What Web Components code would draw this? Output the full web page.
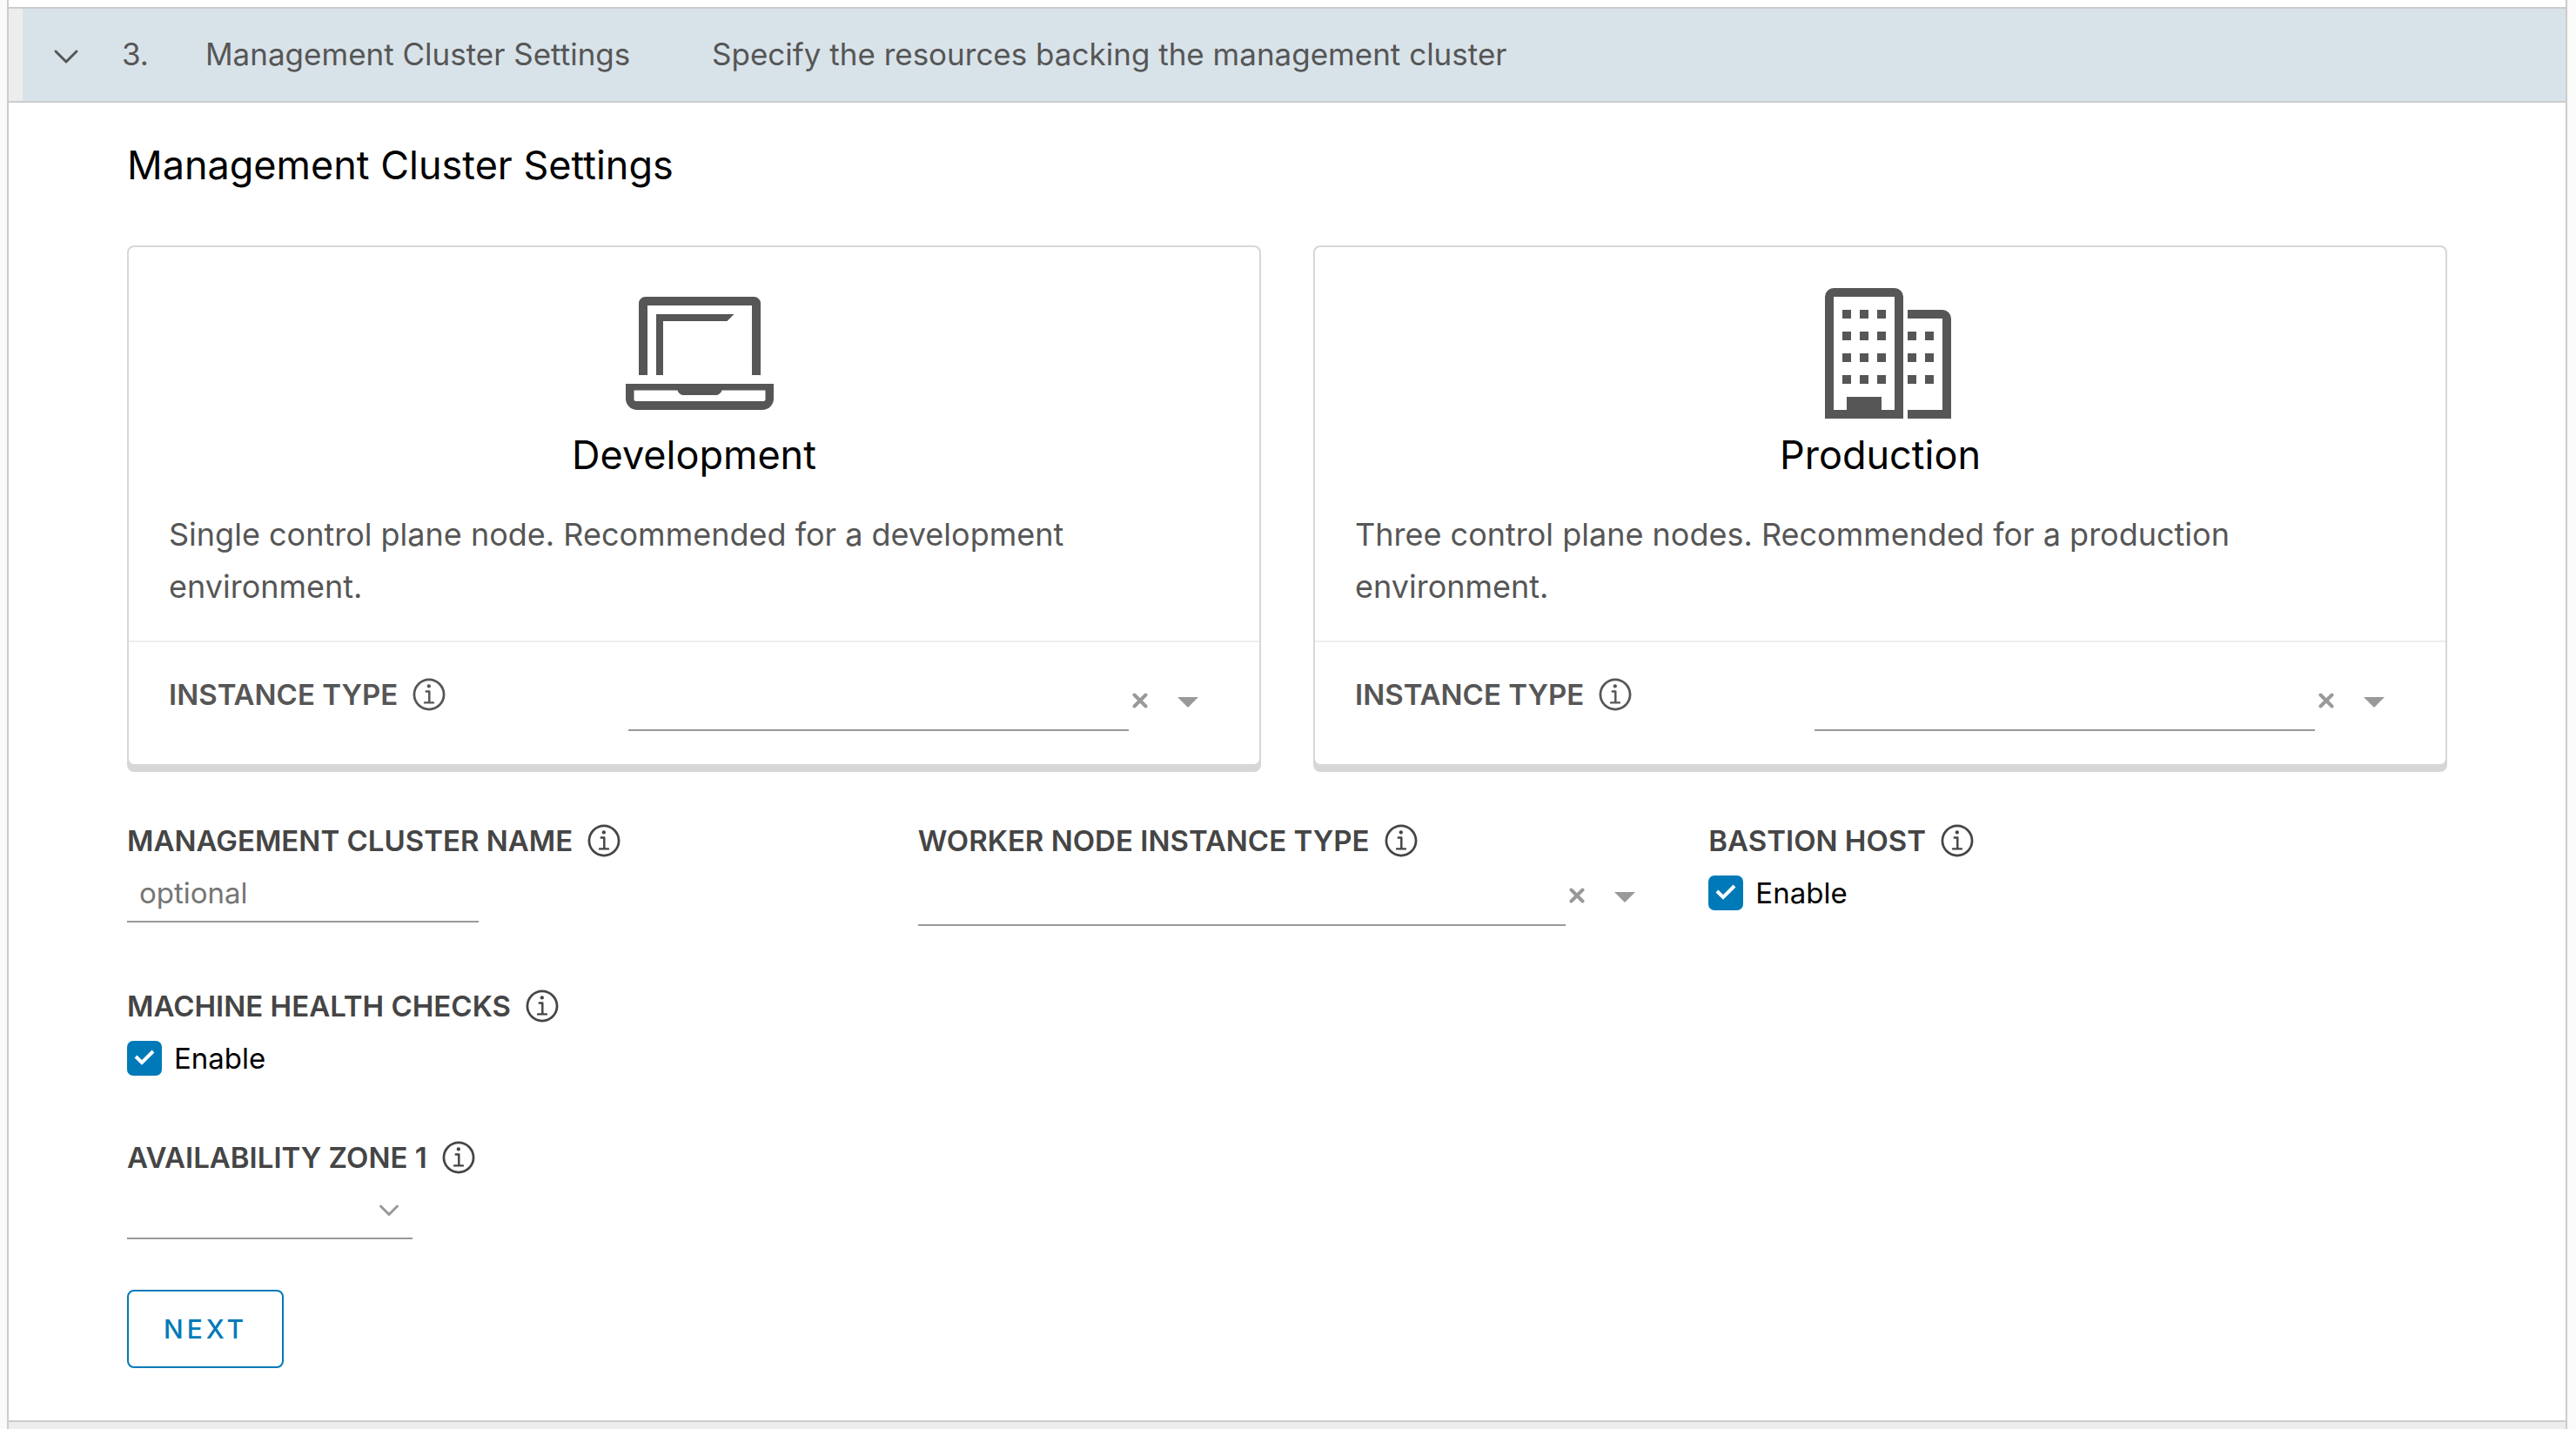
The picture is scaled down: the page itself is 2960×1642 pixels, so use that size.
<!DOCTYPE html>
<html lang="en">
<head>
<meta charset="utf-8">
<title>Management Cluster Settings</title>
<style>
  html { background: #fafafa; }
  body { margin: 0 10px 0 8px; font-family: Inter, "Open Sans", sans-serif; color: #000; min-height: 100vh; display: flex; }
  wizard-panel { flex: 1; }
</style>
</head>
<body>
<wizard-panel>
  <wizard-step number="3." heading="Management Cluster Settings" summary="Specify the resources backing the management cluster">
    <cluster-form></cluster-form>
  </wizard-step>
</wizard-panel>

<script>
const define = (name, html, setup) => {
  const template = document.createElement('template');
  template.innerHTML = '<style>*{box-sizing:border-box}button,input,select{font:inherit;color:inherit;margin:0}</style>' + html;
  customElements.define(name, class extends HTMLElement {
    constructor() {
      super();
      this.attachShadow({ mode: 'open' }).append(template.content.cloneNode(true));
    }
    connectedCallback() {
      if (setup) setup(this, this.shadowRoot);
    }
  });
};
const fill = (host, root) => {
  root.querySelectorAll('[data-text]').forEach(el => { el.textContent = host.getAttribute(el.dataset.text); });
};

define('info-icon', `
  <style>
    :host { display: block; width: 40px; height: 40px; flex: none; }
    svg { display: block; width: 100%; height: 100%; fill: currentColor; }
  </style>
  <svg viewBox="5 5 26 26" aria-hidden="true">
    <path fill-rule="evenodd" d="M18 6a12 12 0 1 0 0 24 12 12 0 0 0 0-24Zm0 22.2a10.2 10.2 0 1 1 0-20.4 10.2 10.2 0 0 1 0 20.4Z"/>
    <circle cx="17.9" cy="11.8" r="1.4"/>
    <path d="M21.2 23.3H19v-7.600a.8.8 0 0 0-.8-.8h-2.300a.8.8 0 0 0 0 1.600h1.500v6.800h-2.600a.8.8 0 0 0 0 1.600h6.400a.8.8 0 0 0 0-1.600Z"/>
  </svg>`);

const labelStyle = `
  .label { display: flex; align-items: center; gap: 16px; height: 40px; font-size: 33px; line-height: 40px; font-weight: 600; color: #454545; white-space: nowrap; }`;

define('combo-input', `
  <style>
    :host { display: block; }
    ${labelStyle}
    .combo { display: flex; align-items: flex-start; margin-top: 16px; }
    input { flex: 1; min-width: 0; height: 62px; border: 0; border-bottom: 2px solid #999; background: none; padding: 0 16px; font-size: 33px; outline: 0; border-radius: 0; }
    button { height: 54px; border: 0; padding: 0; background: none; display: grid; place-items: center; color: #999; }
    .clear { width: 26px; }
    .toggle { width: 78px; padding: 4px 0 0 6px; }
    svg { display: block; fill: currentColor; }
    :host([inline]) { display: grid; grid-template-columns: 7fr 9fr; }
    :host([inline]) .label { color: #565656; }
    :host([inline]) .combo { margin-top: 0; }
  </style>
  <div class="label"><label for="field" data-text="label"></label><info-icon></info-icon></div>
  <div class="combo">
    <input id="field" type="text">
    <button class="clear" type="button" aria-label="Clear"><svg width="18" height="18" viewBox="0 0 18 18"><path d="M2.500 2.500l13 13M15.500 2.500l-13 13" stroke="currentColor" stroke-width="4" stroke-linecap="round"/></svg></button>
    <button class="toggle" type="button" aria-label="Show options"><svg width="24" height="12" viewBox="0 0 24 12"><path d="M0 0h24L12 12Z"/></svg></button>
  </div>`, fill);

define('text-field', `
  <style>
    :host { display: block; }
    ${labelStyle}
    input { display: block; width: 404px; height: 66px; margin-top: 8px; border: 0; border-bottom: 2px solid #999; border-radius: 0; background: none; padding: 0 14px; font-size: 33px; outline: 0; }
    input::placeholder { color: #757575; opacity: 1; }
  </style>
  <div class="label"><label for="field" data-text="label"></label><info-icon></info-icon></div>
  <input id="field" type="text">`, (host, root) => {
    fill(host, root);
    root.querySelector('input').placeholder = host.getAttribute('placeholder');
  });

define('check-field', `
  <style>
    :host { display: block; }
    ${labelStyle}
    .option { display: flex; align-items: center; gap: 14px; height: 64px; margin-top: 8px; font-size: 33px; line-height: 40px; }
    .box { display: grid; width: 40px; height: 40px; }
    .box > * { grid-area: 1 / 1; }
    input { appearance: none; width: 40px; height: 40px; border: 2px solid #999; border-radius: 7px; background: #fff; }
    input:checked { border-color: #0079b8; background: #0079b8; }
    svg { width: 40px; height: 40px; pointer-events: none; fill: none; stroke: #fff; stroke-width: 4; }
  </style>
  <div class="label"><span id="title" data-text="label"></span><info-icon></info-icon></div>
  <div class="option">
    <span class="box">
      <input id="field" type="checkbox" checked aria-describedby="title">
      <svg viewBox="0 0 40 40" aria-hidden="true"><path d="M10 18L17 25L30 12"/></svg>
    </span>
    <label for="field">Enable</label>
  </div>`, fill);

define('select-field', `
  <style>
    :host { display: block; }
    ${labelStyle}
    .control { display: grid; width: 328px; margin-top: 8px; }
    .control > * { grid-area: 1 / 1; }
    select { appearance: none; width: 100%; height: 66px; border: 0; border-bottom: 2px solid #999; border-radius: 0; background: none; padding: 0 48px 0 14px; font-size: 33px; outline: 0; }
    svg { place-self: center end; margin-right: 14px; width: 26px; height: 26px; pointer-events: none; fill: none; stroke: #999; stroke-width: 3; stroke-linecap: round; stroke-linejoin: round; }
  </style>
  <div class="label"><label for="field" data-text="label"></label><info-icon></info-icon></div>
  <div class="control">
    <select id="field"><option></option></select>
    <svg viewBox="0 0 26 26" aria-hidden="true"><path d="M3.500 8l9.500 9.500L22.500 8"/></svg>
  </div>`, fill);

define('plan-card', `
  <style>
    :host { display: block; border: 2px solid #d7d7d7; border-radius: 8px; box-shadow: 0 7px 0 0 #d7d7d7; background: #fff; }
    .about { padding: 37px 46px 32px; }
    .icon { display: flex; justify-content: center; padding-left: 12px; color: #565656; }
    h3 { margin: 4px 0 33px; font-size: 45px; line-height: 56px; font-weight: 400; text-align: center; }
    p { margin: 0; font-size: 36px; line-height: 60px; color: #565656; }
    .setting { border-top: 2px solid #ededed; padding: 40px 46px 38px; }
  </style>
  <div class="about">
    <div class="icon"><slot name="icon"></slot></div>
    <h3 data-text="heading"></h3>
    <p><slot></slot></p>
  </div>
  <div class="setting"><combo-input inline label="INSTANCE TYPE"></combo-input></div>`, fill);

define('wizard-step', `
  <style>
    :host { display: block; border-top: 2px solid #ccc; border-bottom: 2px solid #ccc; }
    .header { display: flex; align-items: center; width: 100%; height: 106px; border: 0; border-left: 16px solid #ededed; padding: 0 32px 2px 34px; background: #d8e3e9; color: #565656; font-size: 35px; line-height: 48px; text-align: left; }
    svg { width: 32px; height: 32px; fill: none; stroke: currentColor; stroke-width: 3; stroke-linecap: round; stroke-linejoin: round; }
    .number { width: 96px; margin-left: 48px; }
    .name { width: 582px; }
    .content { border-top: 2px solid #ccc; padding: 42px 136px 60px; }
    h2 { margin: 0 0 62px; font-size: 45px; line-height: 60px; font-weight: 400; }
  </style>
  <button class="header" type="button" aria-expanded="true">
    <svg viewBox="0 0 32 32" aria-hidden="true"><path d="M4 13l12 12L28 13"/></svg>
    <span class="number" data-text="number"></span>
    <span class="name" data-text="heading"></span>
    <span data-text="summary"></span>
  </button>
  <div class="content">
    <h2 data-text="heading"></h2>
    <slot></slot>
  </div>`, fill);

define('wizard-panel', `
  <style>
    :host { display: flex; flex-direction: column; border: 2px solid #ccc; border-width: 0 2px; padding-top: 8px; background: #fff; }
    .next-step { flex: 1; background: #ededed; }
  </style>
  <slot></slot>
  <div class="next-step"></div>`);

define('cluster-form', `
  <style>
    :host { display: block; }
    .plans, .fields { display: grid; gap: 60px; }
    .plans { grid-template-columns: 1fr 1fr; margin-bottom: 66px; }
    .fields { grid-template-columns: 1fr 1fr 1fr; margin-bottom: 72px; }
    check-field.health { margin-bottom: 62px; }
    plan-card svg { display: block; width: 180px; height: 170px; fill: currentColor; }
    .next { display: block; height: 90px; margin-top: 58px; padding: 0 40px; border: 2px solid #0079b8; border-radius: 8px; background: #fff; color: #0079b8; font-size: 30px; font-weight: 500; letter-spacing: 4px; }
  </style>
  <form>
    <div class="plans">
      <plan-card heading="Development">
        <svg slot="icon" viewBox="0 0 36 34" aria-hidden="true">
          <path d="M6 6h24v16h2V5.500A1.500 1.500 0 0 0 30.500 4h-25A1.500 1.500 0 0 0 4 5.500V22h2Z"/>
          <path d="M8 8v14h1.600V9.600h14.700L25.900 8Z"/>
          <path fill-rule="evenodd" d="M1 24v3.400A2.600 2.600 0 0 0 3.600 30h28.800a2.600 2.600 0 0 0 2.600-2.600V24Zm32.100 3.500a.5.5 0 0 1-.5.500H3.400a.5.5 0 0 1-.5-.5v-2h10c.2.7.8 1.100 1.500 1.100h7.200c.7 0 1.300-.4 1.500-1.100h10Z"/>
        </svg>
        Single control plane node. Recommended for a development environment.
      </plan-card>
      <plan-card heading="Production">
        <svg slot="icon" viewBox="0 0 36 34" aria-hidden="true">
          <path d="M4 32V4a2 2 0 0 1 2-2h14a2 2 0 0 1 2 2v28ZM6 4v26h3v-3h8v3h3V4Z" fill-rule="evenodd"/>
          <path d="M23 7h8a2 2 0 0 1 2 2v23H23v-2h8V9h-8Z"/>
          <path d="M8 7h2v2H8Zm4 0h2v2h-2Zm4 0h2v2h-2ZM8 12h2v2H8Zm4 0h2v2h-2Zm4 0h2v2h-2ZM8 17h2v2H8Zm4 0h2v2h-2Zm4 0h2v2h-2ZM8 22h2v2H8Zm4 0h2v2h-2Zm4 0h2v2h-2ZM23 12h2v2h-2Zm4 0h2v2h-2ZM23 17h2v2h-2Zm4 0h2v2h-2ZM23 22h2v2h-2Zm4 0h2v2h-2Z"/>
        </svg>
        Three control plane nodes. Recommended for a production environment.
      </plan-card>
    </div>
    <div class="fields">
      <text-field label="MANAGEMENT CLUSTER NAME" placeholder="optional"></text-field>
      <combo-input label="WORKER NODE INSTANCE TYPE"></combo-input>
      <check-field label="BASTION HOST"></check-field>
    </div>
    <check-field class="health" label="MACHINE HEALTH CHECKS"></check-field>
    <select-field label="AVAILABILITY ZONE 1"></select-field>
    <button class="next" type="button">NEXT</button>
  </form>`);
</script>
</body>
</html>
